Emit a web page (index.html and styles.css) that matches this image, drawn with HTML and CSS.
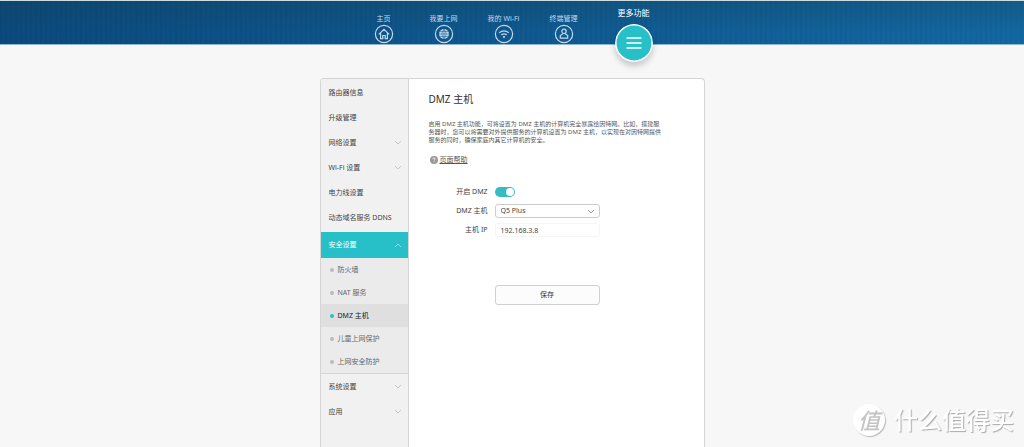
FILE: index.html
```html
<!DOCTYPE html>
<html lang="zh-CN">
<head>
<meta charset="utf-8">
<meta name="viewport" content="width=device-width, initial-scale=1">
<title>DMZ 主机</title>
<link rel="stylesheet" href="styles.css">
</head>
<body>
<header class="topbar">
  <nav class="nav">
    <a class="nav-item" href="#"><span>主页</span>
      <svg class="nav-icon" viewBox="0 0 20 20"><circle cx="10" cy="10" r="8.6"/><path d="M4.800 10.400 10 5.300l5.200 5.100M6.600 9.200v5.400h2.200v-3.100h2.400v3.100h2.200V9.200"/></svg></a>
    <a class="nav-item" href="#"><span>我要上网</span>
      <svg class="nav-icon" viewBox="0 0 20 20"><circle cx="10" cy="10" r="8.6"/><circle class="globe" cx="10" cy="10" r="4.900"/><path class="thin" d="M5.100 10h9.800M5.800 7.500h8.400M5.800 12.500h8.400M10 5.100v9.800M10 5.100Q5.800 10 10 14.900M10 5.100Q14.200 10 10 14.900"/></svg></a>
    <a class="nav-item" href="#"><span>我的 Wi-Fi</span>
      <svg class="nav-icon" viewBox="0 0 20 20"><circle cx="10" cy="10" r="8.6"/><path d="M5.200 8.800q4.800-3.800 9.600 0M7.300 11q2.700-2.200 5.400 0"/><circle class="dot" cx="10" cy="13" r="1.100"/></svg></a>
    <a class="nav-item" href="#"><span>终端管理</span>
      <svg class="nav-icon" viewBox="0 0 20 20"><circle cx="10" cy="10" r="8.6"/><circle cx="10" cy="7.300" r="2.200"/><path d="M8.900 9.700 6.300 11.600v2.500h7.400v-2.500l-2.600-1.900"/></svg></a>
    <a class="nav-item nav-more" href="#"><span>更多功能</span>
      <svg class="more-icon" viewBox="0 0 38 38"><circle cx="19" cy="19" r="18.200"/><path d="M11.500 14h15M11.500 19h15M11.500 24h15"/></svg></a>
  </nav>
</header>
<main class="panel">
  <aside class="sidebar">
    <div class="menu-group">
      <a class="menu-item" href="#">路由器信息</a>
      <a class="menu-item" href="#">升级管理</a>
      <a class="menu-item" href="#">网络设置<svg class="chevron" viewBox="0 0 8 5"><path d="m1 1 3 3 3-3"/></svg></a>
      <a class="menu-item" href="#">Wi-Fi 设置<svg class="chevron" viewBox="0 0 8 5"><path d="m1 1 3 3 3-3"/></svg></a>
      <a class="menu-item" href="#">电力线设置</a>
      <a class="menu-item" href="#">动态域名服务 DDNS</a>
    </div>
    <a class="menu-item menu-open" href="#">安全设置<svg class="chevron" viewBox="0 0 8 5"><path d="m1 4 3-3 3 3"/></svg></a>
    <div class="submenu">
      <a class="sub-item" href="#">防火墙</a>
      <a class="sub-item" href="#">NAT 服务</a>
      <a class="sub-item sub-active" href="#">DMZ 主机</a>
      <a class="sub-item" href="#">儿童上网保护</a>
      <a class="sub-item" href="#">上网安全防护</a>
    </div>
    <a class="menu-item" href="#">系统设置<svg class="chevron" viewBox="0 0 8 5"><path d="m1 1 3 3 3-3"/></svg></a>
    <a class="menu-item" href="#">应用<svg class="chevron" viewBox="0 0 8 5"><path d="m1 1 3 3 3-3"/></svg></a>
  </aside>
  <section class="content">
    <h1 class="title">DMZ 主机</h1>
    <p class="intro">启用 DMZ 主机功能，可将设置为 DMZ 主机的计算机完全暴露给因特网。比如，搭建服<br>务器时，您可以将需要对外提供服务的计算机设置为 DMZ 主机，以实现在对因特网提供<br>服务的同时，确保家庭内其它计算机的安全。</p>
    <a class="help" href="#"><svg class="help-icon" viewBox="0 0 8 8"><circle cx="4" cy="4" r="4"/><path d="M2.800 3.200q0-1.200 1.200-1.200t1.200 1.100Q5.200 3.700 4 4.500M4 5.400v.8"/></svg><span>页面帮助</span></a>
    <form class="form">
      <label for="dmz-on">开启 DMZ</label>
      <input class="switch" type="checkbox" id="dmz-on" checked>
      <label for="host">DMZ 主机</label>
      <span class="select-wrap"><select class="field" id="host"><option>Q5 Plus</option></select><svg class="select-arrow" viewBox="0 0 8 5"><path d="m1 1 3 3 3-3"/></svg></span>
      <label for="ip">主机 IP</label>
      <input class="field field-plain" type="text" id="ip" value="192.168.3.8" readonly>
      <button class="save" type="button">保存</button>
    </form>
  </section>
</main>
<div class="watermark"><span class="seal">值</span><span>什么值得买</span></div>
</body>
</html>
```
FILE: styles.css
```css
* { box-sizing: border-box; }
body {
  margin: 0;
  min-height: 100vh;
  display: flex;
  flex-direction: column;
  background: #f7f7f7;
  color: #444;
  font: 7px/8px "Noto Sans", "Noto Sans CJK SC", sans-serif;
}
a { color: inherit; text-decoration: none; }
svg { fill: none; stroke: currentColor; flex: none; }

.topbar {
  height: 45px;
  border-top: 1px solid #cbdde2;
  border-bottom: 1px solid #8fb5d0;
  background:
    repeating-linear-gradient(90deg, rgba(0, 30, 60, .06) 0 2px, transparent 2px 5px),
    linear-gradient(rgba(20, 65, 80, .3), transparent 75%),
    linear-gradient(90deg, #0b4a7e, #1368a3);
}
.nav {
  display: flex;
  align-items: flex-start;
  width: 100%;
  max-width: 385px;
  margin: 0 auto;
  padding-left: 34px;
}
.nav-item {
  display: flex;
  flex-direction: column;
  align-items: center;
  gap: 5px;
  width: 60px;
  padding-top: 14px;
  color: #c3d9e8;
}
.nav-icon { width: 20px; height: 20px; margin-top: -4px; stroke-width: 1.2; }
.globe, .dot { fill: currentColor; stroke: none; }
.thin { stroke: #12568a; stroke-width: .5; }
.nav-more {
  gap: 7px;
  width: 80px;
  padding-top: 8px;
  color: #fff;
  font-size: 8px;
}
.more-icon {
  width: 38px;
  height: 38px;
  border-radius: 50%;
  fill: #27c0c8;
  stroke-width: 1.5;
  box-shadow: 0 4px 6px rgba(0, 0, 0, .2);
}

.panel {
  flex: 1;
  display: flex;
  width: 100%;
  max-width: 385px;
  margin: 33px auto 0;
  border: 1px solid #d5d5d5;
  border-bottom: 0;
  border-radius: 4px 4px 0 0;
  background: #fff;
  overflow: hidden;
}
.sidebar {
  flex: none;
  width: 88px;
  border-right: 1px solid #d5d5d5;
  background: #f1f1f1;
}
.menu-group { padding: 1px 0 2px; }
.menu-item {
  display: flex;
  align-items: center;
  justify-content: space-between;
  height: 25px;
  padding: 0 6px 0 8px;
  white-space: nowrap;
}
.menu-open { height: 26px; background: #27c0c8; color: #fff; }
.chevron { width: 8px; height: 5px; stroke: #bbb; stroke-width: .8; }
.menu-open .chevron { stroke: #a5e6e9; }
.submenu { border-bottom: 1px solid #d5d5d5; background: #ebebeb; }
.sub-item {
  display: flex;
  align-items: center;
  gap: 4px;
  height: 23px;
  padding-left: 9px;
  color: #666;
}
.sub-item::before {
  content: "";
  width: 4px;
  height: 4px;
  border-radius: 50%;
  background: #bbb;
}
.sub-active { background: #dfdfdf; color: #222; }
.sub-active::before { background: #27c0c8; }

.content { flex: 1; padding: 13px 0 20px 20px; }
.title { margin: 0; color: #333; font-size: 10px; font-weight: 400; line-height: 14px; }
.intro { margin: 14px 0 0; color: #555; font-size: 6px; white-space: nowrap; }
.help { display: inline-flex; align-items: center; gap: 2px; margin: 12px 0 0 1px; color: #555; }
.help span { text-decoration: underline; }
.help-icon { width: 8px; height: 8px; fill: #999; stroke: none; }
.help-icon path { fill: none; stroke: #fff; stroke-width: .8; }

.form {
  display: grid;
  grid-template-columns: 59px 105px;
  grid-template-rows: 14px 14px 14px;
  column-gap: 7px;
  row-gap: 5px;
  align-items: center;
  margin-top: 19px;
}
.form label { text-align: right; }
.switch {
  appearance: none;
  display: flex;
  align-items: center;
  justify-content: flex-end;
  width: 20px;
  height: 10px;
  margin: 0;
  padding: 1px;
  border-radius: 5px;
  background: #35bcc3;
}
.switch::before { content: ""; width: 8px; height: 8px; border-radius: 50%; background: #fff; }
.select-wrap { display: grid; align-items: center; }
.select-wrap > * { grid-area: 1 / 1; }
.select-arrow { justify-self: end; width: 8px; height: 5px; margin-right: 5px; stroke: #888; stroke-width: .8; pointer-events: none; }
.field {
  appearance: none;
  width: 100%;
  height: 14px;
  margin: 0;
  padding: 0 5px;
  border: 1px solid #ccc;
  border-radius: 3px;
  background: #fff;
  color: #444;
  font: inherit;
}
.field-plain { border-color: #f5f5f5; }
.save {
  grid-column: 2;
  height: 20px;
  margin-top: 43px;
  padding: 0;
  border: 1px solid #d0d0d0;
  border-radius: 3px;
  background: #fcfcfc;
  color: #333;
  font: inherit;
}

.watermark {
  position: fixed;
  right: 10px;
  bottom: 10px;
  display: flex;
  align-items: center;
  gap: 9px;
  color: #fff;
  font-size: 24px;
  font-weight: 500;
  line-height: 34px;
  text-shadow: 1px 1px 1px #aaa;
}
.seal {
  width: 32px;
  height: 32px;
  border-radius: 50%;
  background: #fff;
  box-shadow: 1px 1px 1px #bbb;
  color: #c4c4c4;
  font-size: 22px;
  font-style: italic;
  line-height: 32px;
  text-align: center;
  text-shadow: none;
}
```
